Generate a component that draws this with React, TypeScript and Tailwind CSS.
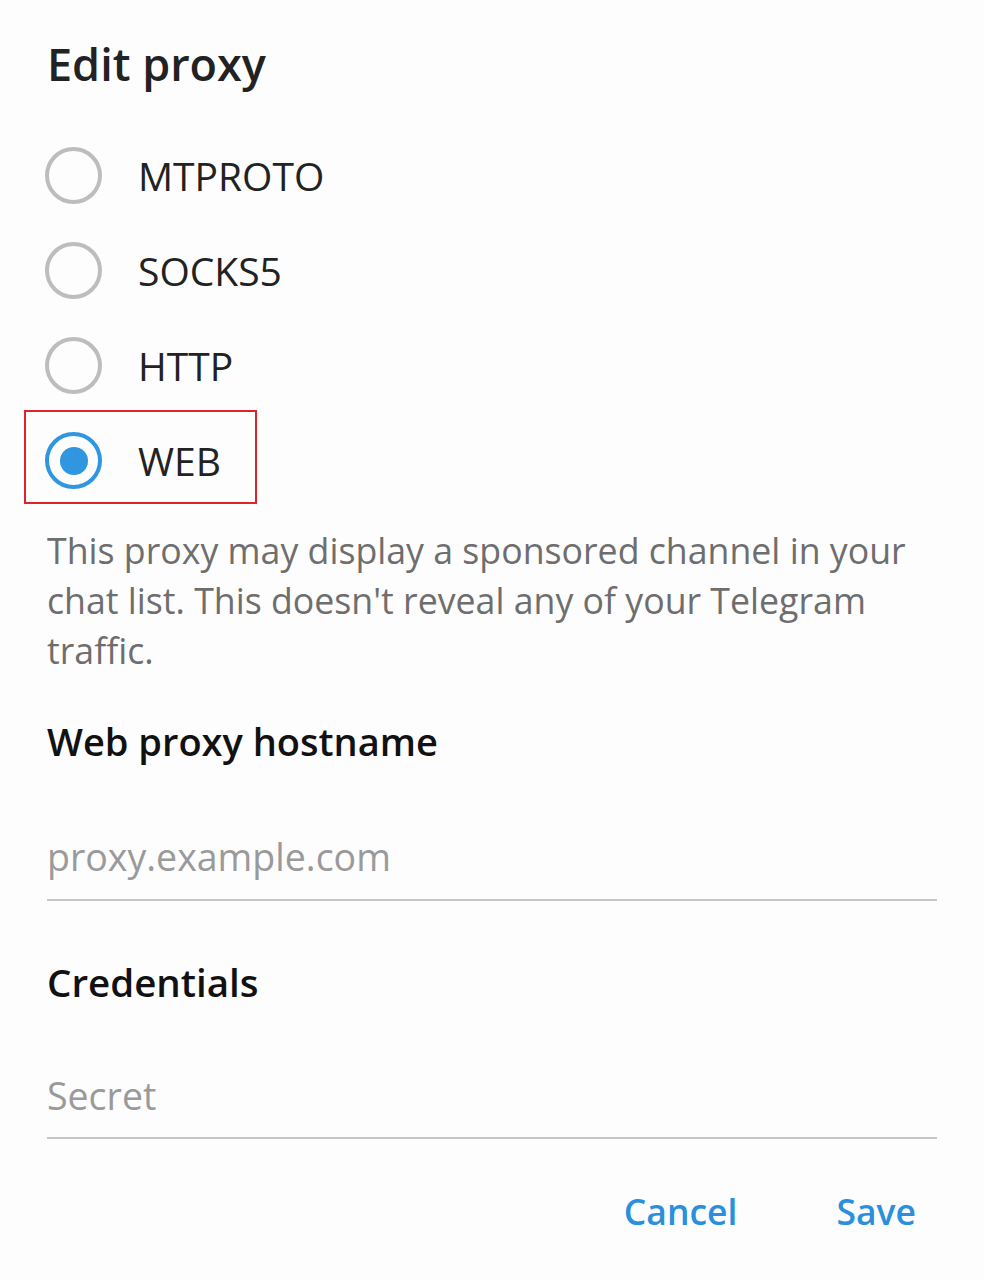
const options = [
  { label: "MTPROTO", checked: false },
  { label: "SOCKS5", checked: false },
  { label: "HTTP", checked: false },
  { label: "WEB", checked: true },
];

function Radio({ checked }: { checked: boolean }) {
  return (
    <div
      className={`ml-[-2px] w-[57px] h-[57px] shrink-0 rounded-full border-[4px] flex items-center justify-center ${
        checked ? "border-[#2f96df]" : "border-[#bdbdbd]"
      }`}
    >
      {checked && <div className="w-[28px] h-[28px] rounded-full bg-[#2f96df]" />}
    </div>
  );
}

export default function App() {
  return (
    <div
      className="min-h-[1280px] bg-[#fdfdfd] px-[47px] pt-[33px]"
      style={{ fontFamily: '"Open Sans", "Noto Sans", sans-serif' }}
    >
      <h1 className="text-[45px] leading-[62px] font-semibold text-[#222]">Edit proxy</h1>

      {/* Proxy type */}
      <div className="mt-[33px]">
        {options.map((o) => (
          <div key={o.label} className="relative h-[95px] flex items-center gap-[36px]">
            <Radio checked={o.checked} />
            <span className="text-[39px] leading-[52px] text-[#222]">{o.label}</span>
            {o.checked && (
              <div className="absolute left-[-23px] top-[-3px] w-[233px] h-[94px] border-2 border-[#e0232b]" />
            )}
          </div>
        ))}
      </div>

      <p className="mt-[17px] text-[35.7px] leading-[50px] text-[#6e6e6e]">
        This proxy may display a sponsored channel in your chat list. This doesn't reveal any of your
        Telegram traffic.
      </p>

      <h2 className="mt-[42px] text-[38px] leading-[48px] font-semibold text-[#111]">Web proxy hostname</h2>
      <div className="mt-[68px] pb-[18px] border-b-2 border-[#c6c6c6] text-[37.5px] leading-[48px] text-[#9a9a9a]">
        proxy.example.com
      </div>

      <h2 className="mt-[57px] text-[38.5px] leading-[48px] font-semibold text-[#111]">Credentials</h2>
      <div className="mt-[66px] pb-[17px] border-b-2 border-[#c6c6c6] text-[37.5px] leading-[48px] text-[#9a9a9a]">
        Secret
      </div>

      <div className="mt-[48px] mr-[21px] flex justify-end gap-[99px] text-[35.5px] leading-[48px] font-semibold text-[#2a8fdc]">
        <button>Cancel</button>
        <button>Save</button>
      </div>
    </div>
  );
}
